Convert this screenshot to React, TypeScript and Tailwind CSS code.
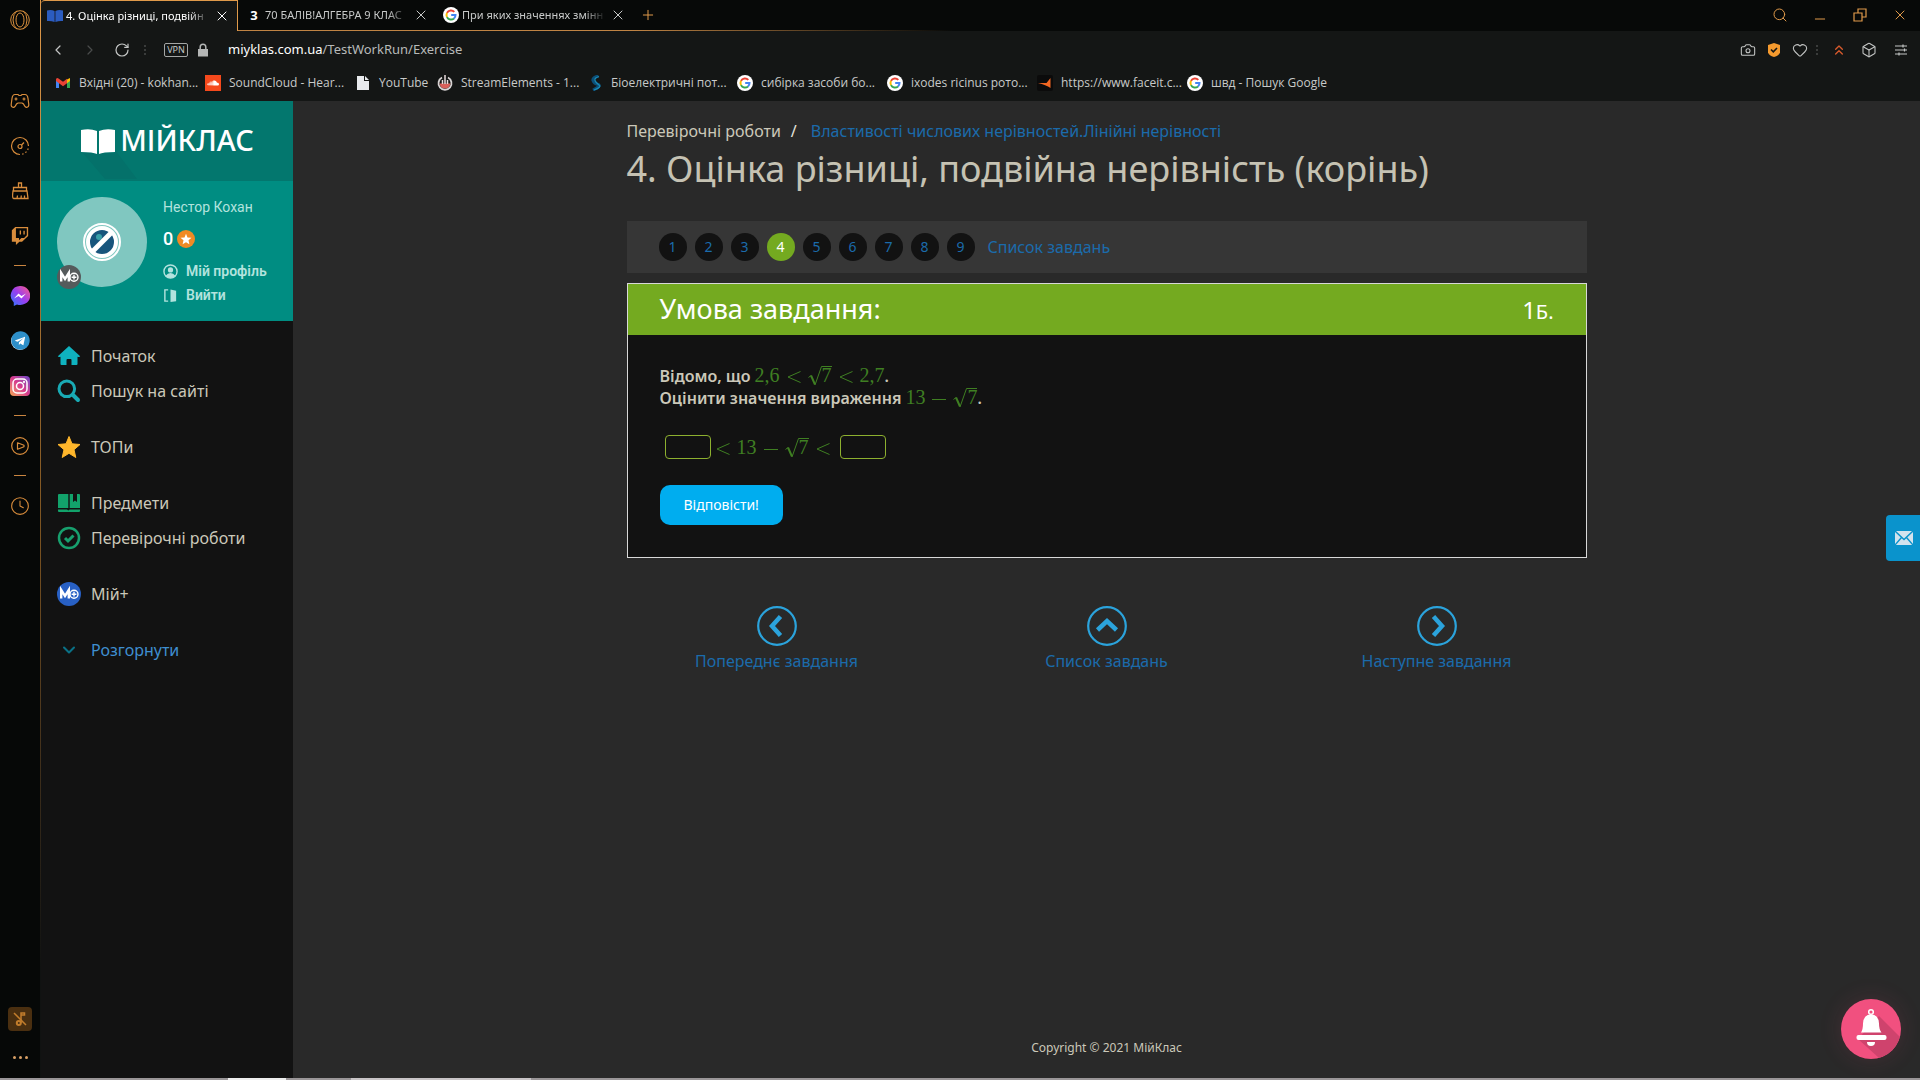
import { ReactNode } from 'react'
import {
  Box,
  Camera,
  ChevronDown,
  ChevronLeft,
  ChevronRight,
  ChevronsUp,
  Clock,
  Heart,
  Minus,
  Plus,
  RotateCw,
  Search,
  X,
} from 'lucide-react'
import { FaSoundcloud, FaTelegram, FaTwitch } from 'react-icons/fa'

const tabs = [
  { title: '4. Оцінка різниці, подвійн', icon: 'book', active: true },
  { title: '70 БАЛІВ!АЛГЕБРА 9 КЛАС', icon: 'three', active: false },
  { title: 'При яких значеннях змінн', icon: 'google', active: false },
]

const bookmarks = [
  { title: 'Вхідні (20) - kokhan...', icon: 'gmail', width: 'w-[150px]' },
  { title: 'SoundCloud - Hear...', icon: 'soundcloud', width: 'w-[150px]' },
  { title: 'YouTube', icon: 'page', width: 'w-[82px]' },
  { title: 'StreamElements - 1...', icon: 'stream', width: 'w-[150px]' },
  { title: 'Біоелектричні пот...', icon: 'bio', width: 'w-[150px]' },
  { title: 'сибірка засоби бо...', icon: 'google', width: 'w-[150px]' },
  { title: 'ixodes ricinus рото...', icon: 'google', width: 'w-[150px]' },
  { title: 'https://www.faceit.c...', icon: 'faceit', width: 'w-[150px]' },
  { title: 'швд - Пошук Google', icon: 'google', width: 'w-[150px]' },
]

const menu = [
  [
    { title: 'Початок', icon: 'home' },
    { title: 'Пошук на сайті', icon: 'search' },
  ],
  [{ title: 'ТОПи', icon: 'star' }],
  [
    { title: 'Предмети', icon: 'books' },
    { title: 'Перевірочні роботи', icon: 'check' },
  ],
  [{ title: 'Мій+', icon: 'plus' }],
]

function Favicon({ name }: { name: string }) {
  switch (name) {
    case 'book':
      return (
        <svg viewBox="0 0 16 16" className="size-4 shrink-0">
          <path d="M0 2.5q4-1 7.6.4v11Q4 12.600 0 13zM16 2.500q-4-1-7.600.4v11Q12 12.600 16 13z" fill="#2b5cc0" />
        </svg>
      )
    case 'three':
      return <span className="w-4 shrink-0 text-center text-[13px] leading-4 font-bold text-white">3</span>
    case 'gmail':
      return (
        <svg viewBox="0 0 16 16" className="size-4 shrink-0">
          <path d="M1 4v9h3V7z" fill="#4285f4" />
          <path d="M15 4v9h-3V7z" fill="#34a853" />
          <path d="M12 4.500 15 3v3l-3 2.300z" fill="#fbbc04" />
          <path d="M1 4.500Q1.500 2.500 3.500 3.400L8 6.800l4-3v4.400l-4 3-7-5.200z" fill="#ea4335" />
        </svg>
      )
    case 'soundcloud':
      return (
        <span className="flex size-4 shrink-0 items-center justify-center bg-[#f5491c]">
          <FaSoundcloud className="size-3 text-white" />
        </span>
      )
    case 'page':
      return (
        <svg viewBox="0 0 16 16" className="size-4 shrink-0">
          <path d="M2 1h7v5h5v9H2z" fill="#e8eaed" />
          <path d="M10 1l4 4h-4z" fill="#e8eaed" />
        </svg>
      )
    case 'stream':
      return (
        <svg viewBox="0 0 16 16" className="size-4 shrink-0" fill="none">
          <path d="M5 2.500A6.500 6.500 0 1 0 11 2.500" stroke="#d8d4d4" strokeWidth="1.800" />
          <path d="M2.500 8.500h11q-1 5-5.500 5t-5.500-5z" fill="#d9605a" />
          <path d="M8 0v9M5.500 5v4M10.500 5v4" stroke="#e8dcdc" strokeWidth="1.500" />
        </svg>
      )
    case 'bio':
      return (
        <svg viewBox="0 0 16 16" className="size-4 shrink-0" fill="none">
          <path d="M11.500 1Q5 2.500 6 5.500T11 9.500 6 15" stroke="#0b4f78" strokeWidth="3" />
          <path d="M12 1.500Q7 3 8 5.500T12 10 7 15" stroke="#1b8bb5" strokeWidth="1.300" />
        </svg>
      )
    case 'faceit':
      return (
        <svg viewBox="0 0 16 16" className="size-4 shrink-0">
          <rect width="16" height="16" rx="2" fill="#0b0b0b" />
          <path d="M1 8h8.500L13.500 3v10Q9 10 1 8z" fill="#f26722" />
        </svg>
      )
    default:
      return (
        <svg viewBox="0 0 16 16" className="size-4 shrink-0" fill="none" strokeWidth="2">
          <circle cx="8" cy="8" r="8" fill="#fff" />
          <path d="M11.300 4.900A4.500 4.500 0 0 0 4 5.900" stroke="#ea4335" />
          <path d="M4 5.900a4.500 4.500 0 0 0 0 4.200" stroke="#fbbc05" />
          <path d="M4 10.100a4.500 4.500 0 0 0 7 1.300" stroke="#34a853" />
          <path d="M8.200 8h4.300a4.500 4.500 0 0 1-1.500 3.400" stroke="#4285f4" />
        </svg>
      )
  }
}

function MenuIcon({ name }: { name: string }) {
  switch (name) {
    case 'home':
      return (
        <svg viewBox="0 0 24 24" className="size-6" fill="#0fb2bf">
          <path d="M12 2 .8 12.200q.4 1.200 2.700.6V20q0 1 1 1h5v-5q0-1 1-1h3q1 0 1 1v5h5q1 0 1-1v-7.200q2.300.6 2.700-.6z" />
        </svg>
      )
    case 'search':
      return (
        <svg viewBox="0 0 24 24" className="size-6" fill="none" stroke="#19aab4" strokeLinecap="round">
          <circle cx="9.800" cy="9.800" r="7.800" strokeWidth="3" />
          <path d="m16 16 5 5" strokeWidth="4" />
        </svg>
      )
    case 'star':
      return (
        <svg viewBox="0 0 24 24" className="size-6" fill="#ffb62b" stroke="#ffb62b" strokeLinejoin="round">
          <path d="m12 1.500 3 7.300 8 .7-6 5.200 1.800 7.800L12 18.300l-6.800 4.200L7 14.700 1 9.500l8-.7z" />
        </svg>
      )
    case 'books':
      return (
        <svg viewBox="0 0 24 24" className="size-6" fill="#12a36b">
          <path d="M1 4q0-1 1-1h9.300v14H1zM12.700 3H16v8l2-1.600 2 1.600V3h2q1 0 1 1v13H12.700z" />
          <path d="M1 18.500h9l1.300 1 1.400-1H23V20q0 1-1 1H2q-1 0-1-1z" />
        </svg>
      )
    case 'check':
      return (
        <svg viewBox="0 0 24 24" className="size-6" fill="none" stroke="#17a06e">
          <circle cx="12" cy="12" r="10" strokeWidth="2.500" />
          <path d="m8 12 3 3 5.500-5.500" strokeWidth="3" />
        </svg>
      )
    default:
      return <PlusBadge className="bg-[#2860c4]" />
  }
}

function PlusBadge({ className }: { className: string }) {
  return (
    <span className={`flex size-6 items-center justify-center rounded-full ${className}`}>
      <svg viewBox="0 0 24 24" className="size-6" fill="none" stroke="#fff">
        <path d="M4.200 16.500V8l3.800 6 3.800-6v8.500" strokeWidth="2.400" />
        <circle cx="17" cy="12.200" r="4" strokeWidth="1.400" />
        <path d="M17 9.800v4.800M14.600 12.200h4.800" strokeWidth="1.400" />
      </svg>
    </span>
  )
}

function RailButton({ label, children }: { label: string; children: ReactNode }) {
  return (
    <button aria-label={label} className="flex h-[45px] w-full items-center justify-center text-[#d98d3c]">
      {children}
    </button>
  )
}

function RailDivider() {
  return <div className="my-[7px] h-px w-3 bg-[#c98540]" />
}

function BrowserRail() {
  return (
    <aside className="flex w-10 shrink-0 flex-col items-center bg-[#060807]">
      <button aria-label="Opera" className="mt-2 mb-[46px] flex h-6 items-center text-[#d9903d]">
        <svg viewBox="0 0 20 20" className="size-5" fill="none" stroke="currentColor">
          <circle cx="10" cy="10" r="9.300" />
          <ellipse cx="10" cy="10" rx="4" ry="7" />
          <path d="M7 .9Q3 4 3 10t4 9.100M13 .9Q17 4 17 10t-4 9.100" />
        </svg>
      </button>
      <RailButton label="Ігри">
        <svg viewBox="0 0 20 20" className="size-5" fill="none" stroke="currentColor" strokeWidth="1.200">
          <path d="M5 3.500h3l1 1h2l1-1h3q2.500 0 3 4l.8 6q0 3-2.300 2.800-1.500 0-3-3.300l-1.500-1h-4l-1.500 1q-1.500 3.300-3 3.300Q1 16.500 1.200 13.500L2 7.500q.5-4 3-4z" />
          <path d="M4.500 8h3M6 6.500v3M12.500 8h3M14 6.500v3" />
        </svg>
      </RailButton>
      <RailButton label="GX Control">
        <svg viewBox="0 0 20 20" className="size-5" fill="none" stroke="currentColor" strokeWidth="1.200">
          <path d="M10 18.500A8.500 8.500 0 1 1 18.500 10" />
          <path d="M18.200 12.500A8.500 8.500 0 0 1 11 18.400" strokeDasharray="1.500 2" />
          <circle cx="10" cy="10.500" r="2" />
          <path d="m11.500 9 2.500-2.500" />
        </svg>
      </RailButton>
      <RailButton label="GX Cleaner">
        <svg viewBox="0 0 20 20" className="size-5" fill="none" stroke="currentColor" strokeWidth="1.300">
          <path d="M8.500 6.500V2h3v4.500M3.500 10V6.500h13V10M3 10h14l1 7.500H3.500Q2 17 3 10zM7 17.500l.5-3M11 17.500l.3-3M14.500 17.500v-3" />
        </svg>
      </RailButton>
      <RailButton label="Twitch">
        <FaTwitch className="size-[18px]" />
      </RailButton>
      <RailDivider />
      <RailButton label="Messenger">
        <svg viewBox="0 0 20 20" className="size-5">
          <defs>
            <linearGradient id="messenger" x1="0" y1="1" x2="1" y2="0">
              <stop offset="0" stopColor="#2a7bff" />
              <stop offset=".5" stopColor="#9a3df0" />
              <stop offset="1" stopColor="#ff5f86" />
            </linearGradient>
          </defs>
          <path d="M10 0a10 9.500 0 1 1-3 18.500L3.800 20v-3.500A9.500 9.500 0 0 1 10 0z" fill="url(#messenger)" />
          <path d="m4 12.500 4.500-5 3 2.600 4.500-2.600-4.500 5-3-2.600z" fill="#fff" />
        </svg>
      </RailButton>
      <RailButton label="Telegram">
        <span className="flex size-[18px] items-center justify-center rounded-full bg-white">
          <FaTelegram className="size-[19px] shrink-0 text-[#2d8fc9]" />
        </span>
      </RailButton>
      <RailButton label="Instagram">
        <span className="flex size-5 items-center justify-center rounded bg-linear-to-tr from-[#f5a34a] via-[#d8398c] to-[#6a3fc8]">
          <svg viewBox="0 0 20 20" className="size-5" fill="none" stroke="#fff" strokeWidth="1.500">
            <rect x="3" y="3" width="14" height="14" rx="4" />
            <circle cx="10" cy="10" r="3.500" />
            <circle cx="14" cy="6" r=".4" />
          </svg>
        </span>
      </RailButton>
      <RailDivider />
      <RailButton label="Плеєр">
        <svg viewBox="0 0 18 18" className="size-[18px]" fill="none" stroke="currentColor" strokeWidth="1.200">
          <circle cx="9" cy="9" r="8.300" />
          <path d="M6.500 5.800v6.400L13 9.700V8.300z" strokeLinejoin="round" />
        </svg>
      </RailButton>
      <RailDivider />
      <RailButton label="Історія">
        <Clock className="size-5" strokeWidth={1.300} />
      </RailButton>
      <div className="mt-auto flex flex-col items-center gap-5 pb-[15px]">
        <button aria-label="Вимкнути музику" className="flex size-6 items-center justify-center rounded bg-[#4a2f10]">
          <svg viewBox="0 0 24 24" className="size-6" fill="none" stroke="#c27d2c">
            <path d="M13 16V6h3.500v2H13" strokeWidth="1.500" />
            <circle cx="10.800" cy="16" r="2" strokeWidth="2" />
            <path d="m6 6 12 12" strokeWidth="1.500" />
          </svg>
        </button>
        <button aria-label="Ще" className="flex h-3 items-center gap-[3px]">
          <span className="size-[3px] rounded-full bg-[#d9a066]" />
          <span className="size-[3px] rounded-full bg-[#d9a066]" />
          <span className="size-[3px] rounded-full bg-[#d9a066]" />
        </button>
      </div>
    </aside>
  )
}

function Dots() {
  return (
    <svg viewBox="0 0 4 12" className="h-3 w-1" fill="#3a3c3b">
      <path d="M1 1h2v2H1zM1 5h2v2H1zM1 9h2v2H1z" />
    </svg>
  )
}

function BrowserHeader() {
  return (
    <header className="bg-[#141615] text-xs">
      {/* Tab strip */}
      <div className="flex h-[31px] bg-[#070908]">
        {tabs.map((tab) => (
          <div
            key={tab.icon}
            className={
              tab.active
                ? 'flex w-[197px] items-center rounded-tl border-t border-r border-[#e09a4a] bg-[#141615] pl-[6px] text-white'
                : 'flex w-[197px] items-center border-b border-[#c08444] pl-2 text-[#c8cac9]'
            }
          >
            <Favicon name={tab.icon} />
            <span className="ml-[3px] w-[144px] text-[11px] whitespace-nowrap [mask-image:linear-gradient(to_right,black_85%,transparent)]">
              {tab.title}
            </span>
            <button aria-label="Закрити вкладку" className="ml-1 flex size-4 items-center justify-center">
              <X className="size-4" strokeWidth={1.500} />
            </button>
          </div>
        ))}
        <div className="flex flex-1 items-center border-b border-transparent pl-2 text-[#e09a4a] [border-image:linear-gradient(to_right,#c08444,transparent_25%)_1]">
          <button aria-label="Нова вкладка">
            <Plus className="size-4" strokeWidth={1.500} />
          </button>
          <div className="ml-auto flex items-center gap-6 pr-3">
            <button aria-label="Пошук вкладок">
              <Search className="size-4" strokeWidth={1.500} />
            </button>
            <button aria-label="Згорнути" className="pt-2">
              <Minus className="size-4" strokeWidth={1.500} />
            </button>
            <button aria-label="Відновити">
              <svg viewBox="0 0 16 16" className="size-4" fill="none" stroke="currentColor" strokeWidth="1.200">
                <path d="M2 6h8v8H2zM6 6V2h8v8h-4" />
              </svg>
            </button>
            <button aria-label="Закрити">
              <X className="size-4" strokeWidth={1.500} />
            </button>
          </div>
        </div>
      </div>

      {/* Address bar */}
      <div className="flex h-[38px] items-center pl-[9px] text-[#c4c6c5]">
        <button aria-label="Назад">
          <ChevronLeft className="size-4" strokeWidth={1.800} />
        </button>
        <button aria-label="Вперед" className="ml-4 text-[#4a4c4b]">
          <ChevronRight className="size-4" strokeWidth={1.800} />
        </button>
        <button aria-label="Оновити" className="ml-4">
          <RotateCw className="size-4" strokeWidth={1.800} />
        </button>
        <span className="ml-[13px]">
          <Dots />
        </span>
        <button className="ml-[17px] h-[14px] w-6 rounded-xs border border-[#a4a6a5] text-[9px] leading-3">VPN</button>
        <svg viewBox="0 0 12 14" className="ml-[9px] h-[14px] w-3" fill="#b4b6b5">
          <path d="M1 6h10v7.500H1z" />
          <path d="M3.200 6V4a2.800 2.800 0 0 1 5.600 0v2" fill="none" stroke="#b4b6b5" strokeWidth="1.500" />
        </svg>
        <a href="#address" className="ml-[19px] text-[13px] text-[#b8bab9]">
          <span className="text-white">miyklas.com.ua</span>/TestWorkRun/Exercise
        </a>
        <div className="ml-auto flex items-center gap-[10px] pr-[11px]">
          <button aria-label="Знімок">
            <Camera className="size-4" strokeWidth={1.600} />
          </button>
          <button aria-label="Захист">
            <svg viewBox="0 0 16 16" className="size-4">
              <path d="M8 1 2 3v7.500Q3 13.500 8 15q5-1.500 6-4.500V3z" fill="#f59a2e" />
              <path d="m5 7.500 2.300 2.300L11 6" fill="none" stroke="#141615" strokeWidth="1.600" />
            </svg>
          </button>
          <button aria-label="Вподобати">
            <Heart className="size-4" strokeWidth={1.600} />
          </button>
          <div className="-ml-[3px] flex items-center gap-3">
            <Dots />
            <button aria-label="Розширення Faceit" className="text-[#d85a2c]">
              <ChevronsUp className="size-4" strokeWidth={2} />
            </button>
          </div>
          <div className="ml-1 flex items-center gap-4">
            <button aria-label="Розширення">
              <Box className="size-4" strokeWidth={1.600} />
            </button>
            <button aria-label="Налаштування">
              <svg viewBox="0 0 16 16" className="size-4" fill="none" stroke="currentColor" strokeWidth="1.200">
                <path d="M2 4h12M2 8h12M2 12h12M10 2.500v3M11.500 6.500v3M6 10.500v3" />
              </svg>
            </button>
          </div>
        </div>
      </div>

      {/* Bookmarks */}
      <nav className="flex h-8 items-center pb-1 pl-[14px] font-['Open_Sans','Noto_Sans',sans-serif] text-[#c8cac9]">
        {bookmarks.map((b) => (
          <a key={b.title} href="#bookmark" className={`flex items-center gap-2 whitespace-nowrap ${b.width}`}>
            <Favicon name={b.icon} />
            {b.title}
          </a>
        ))}
      </nav>
    </header>
  )
}

function SiteSidebar() {
  return (
    <aside className="w-[252px] shrink-0 bg-[#121212]">
      <a href="#home" className="flex h-20 items-center justify-center gap-1 bg-[#03776e] pb-[2px] text-white">
        <svg viewBox="0 0 36 40" className="h-10 w-9 overflow-visible">
          <path d="M2 32 18 33h17v-3l22 29H25z" fill="#04716a" />
          <path d="M1 10q9-2 16 1v23q-4-2-16-2zM35 10q-9-2-16 1v23q4-2 16-2z" fill="#fff" />
        </svg>
        <span className="text-[29px] font-medium">МІЙКЛАС</span>
      </a>

      <div className="flex h-[140px] bg-[#008d82] pt-4 pl-4 font-[Roboto,sans-serif] text-[#b3e3de]">
        <div className="relative flex size-[90px] items-center justify-center rounded-full bg-[#80c7c0]">
          <svg viewBox="0 0 38 38" className="size-[38px]" fill="none">
            <circle cx="19" cy="19" r="18" stroke="#fff" strokeWidth="2" />
            <circle cx="19" cy="19" r="14" fill="#17557c" stroke="#fff" strokeWidth="4" />
            <circle cx="16" cy="14" r="3" fill="#38a0a8" />
            <path d="M10 28 28 10" stroke="#fff" strokeWidth="5" />
          </svg>
          <div className="absolute bottom-[-2px] left-0">
            <PlusBadge className="bg-[#555b5c]" />
          </div>
        </div>
        <div className="ml-4 text-sm">
          <div className="leading-5">Нестор Кохан</div>
          <div className="mt-2 flex h-7 items-center gap-1 text-lg font-medium text-white">
            0
            <span className="flex size-[18px] items-center justify-center rounded-full bg-[#f08a24]">
              <svg viewBox="0 0 24 24" className="size-3" fill="#fff">
                <path d="m12 1.500 3 7.300 8 .7-6 5.200 1.800 7.800L12 18.300l-6.800 4.200L7 14.700 1 9.500l8-.7z" />
              </svg>
            </span>
          </div>
          <a href="#profile" className="mt-[6px] flex h-6 items-center gap-2 font-semibold">
            <svg viewBox="0 0 16 16" className="size-[15px]" fill="#b3e3de">
              <circle cx="8" cy="8" r="7" fill="none" stroke="#b3e3de" strokeWidth="1.500" />
              <circle cx="8" cy="6.300" r="2.800" />
              <path d="M2.800 12.500q2.200-3 5.200-3t5.200 3Q11 15 8 15t-5.200-2.500z" />
            </svg>
            Мій профіль
          </a>
          <a href="#logout" className="flex h-6 items-center gap-2 font-semibold">
            <svg viewBox="0 0 16 16" className="size-[15px]" fill="#b3e3de">
              <path d="M5.500 2H2v12h3.500" fill="none" stroke="#b3e3de" strokeWidth="1.500" />
              <path d="M8 1.500 14 3v11l-6 1z" />
            </svg>
            Вийти
          </a>
        </div>
      </div>

      <nav className="flex flex-col gap-[21px] pt-[17px] text-base text-[#cbc8b9]">
        {menu.map((group) => (
          <div key={group[0].title}>
            {group.map((item) => (
              <a key={item.title} href="#menu" className="flex h-[35px] items-center gap-[10px] pl-4">
                <MenuIcon name={item.icon} />
                {item.title}
              </a>
            ))}
          </div>
        ))}
        <button className="flex h-[35px] items-center gap-[10px] pl-4 text-[#3f8fd0]">
          <span className="flex size-6 items-center justify-center">
            <ChevronDown className="size-5 text-[#0a7186]" strokeWidth={2.500} />
          </span>
          Розгорнути
        </button>
      </nav>
    </aside>
  )
}

// the radical's foot hangs below the baseline
function Sqrt({ children }: { children: ReactNode }) {
  return (
    <span className="inline-flex items-baseline">
      <svg viewBox="0 0 14 16" className="h-4 w-[14px] overflow-visible" fill="none" stroke="currentColor">
        <path d="m.5 11.500 2.500-2" strokeWidth="1" />
        <path d="m3 9.500 4 9" strokeWidth="2" />
        <path d="M7 19 13.500.5H14" strokeWidth="1" />
      </svg>
      <span className="inline-block border-t border-current leading-4">{children}</span>
    </span>
  )
}

function MathText({ children }: { children: ReactNode }) {
  return (
    <span className="inline-flex items-baseline gap-[7px] font-['Liberation_Serif',serif] text-xl leading-[22px] font-normal text-[#3f7f22]">
      {children}
    </span>
  )
}

function Sign({ type }: { type: 'less' | 'minus' }) {
  return (
    <svg viewBox="0 0 14 14" className="h-[14px] w-[14px] overflow-visible" fill="none" stroke="currentColor">
      <path d={type === 'less' ? 'M13.500 3.500 1 9l12.500 5.500' : 'M0 9.500h14'} />
    </svg>
  )
}

function TaskNavigation() {
  return (
    <nav className="mt-[30px] flex h-[52px] items-center gap-2 bg-[#363636] pl-8">
      {[1, 2, 3, 4, 5, 6, 7, 8, 9].map((n) => (
        <a
          key={n}
          href={`#task-${n}`}
          className={
            n === 4
              ? 'flex size-7 items-center justify-center rounded-full bg-[#74aa20] text-sm text-white'
              : 'flex size-7 items-center justify-center rounded-full bg-[#121212] text-sm text-[#1b6bab]'
          }
        >
          {n}
        </a>
      ))}
      <a href="#tasks" className="ml-[5px] text-[#1b6bab]">
        Список завдань
      </a>
    </nav>
  )
}

function StepLink({ d, title }: { d: string; title: string }) {
  return (
    <a href="#step" className="flex flex-1 flex-col items-center text-[#1b6bab]">
      <svg viewBox="0 0 40 40" className="size-10" fill="none" stroke="#2ba3dc">
        <circle cx="20" cy="20" r="18.800" strokeWidth="2.200" />
        <path d={d} strokeWidth="4.500" />
      </svg>
      <span className="mt-[3px] leading-6">{title}</span>
    </a>
  )
}

export default function App() {
  return (
    <div className="flex min-h-screen flex-col bg-[#060807] font-['Noto_Sans','Open_Sans',sans-serif]">
      <div className="flex flex-1">
        <BrowserRail />
        <div className="w-px bg-linear-to-b from-[#e09a4a] via-[#7a5220] via-50% to-[#101211] to-90%" />
        <div className="flex flex-1 flex-col">
          <BrowserHeader />
          <div className="flex flex-1">
            <SiteSidebar />
            <div className="flex flex-1 flex-col bg-[#292929] px-4">
              <main className="mx-auto w-full max-w-[960px] pt-[18px] text-base">
                <div className="flex leading-6">
                  <a href="#works" className="text-[#cbc8b9]">
                    Перевірочні роботи
                  </a>
                  <span className="mx-[10px] text-[#e4e2dc]">/</span>
                  <a href="#topic" className="ml-1 text-[#1b6bab]">
                    Властивості числових нерівностей.Лінійні нерівності
                  </a>
                </div>
                <h1 className="mt-1 text-4xl leading-[44px] text-[#c5c2b3]">
                  4. Оцінка різниці, подвійна нерівність (корінь)
                </h1>

                <TaskNavigation />

                <section className="mt-[10px] border border-[#d8d8d8] bg-[#121212]">
                  <div className="flex h-[51px] items-center justify-between bg-[#74aa20] px-8 text-white">
                    <h2 className="text-[27px]">Умова завдання:</h2>
                    <span className="text-2xl">
                      1<span className="text-xl">Б.</span>
                    </span>
                  </div>
                  <form className="px-8 pt-[29px] pb-8" onSubmit={(e) => e.preventDefault()}>
                    <div className="font-semibold text-[#cbc8b9]">
                      <p className="flex h-[22px] items-baseline gap-1">
                        Відомо, що
                        <span>
                          <MathText>
                            2,6
                            <Sign type="less" />
                            <Sqrt>7</Sqrt>
                            <Sign type="less" />
                            2,7
                          </MathText>
                          .
                        </span>
                      </p>
                      <p className="flex h-[22px] items-baseline gap-1">
                        Оцінити значення вираження
                        <span>
                          <MathText>
                            13
                            <Sign type="minus" />
                            <Sqrt>7</Sqrt>
                          </MathText>
                          .
                        </span>
                      </p>
                    </div>
                    <div className="mt-[27px] flex h-6 items-center pl-[5px]">
                      <input
                        aria-label="Нижня межа"
                        className="mr-[5px] h-6 w-[46px] rounded border border-[#8db02f] bg-transparent px-1 text-white"
                      />
                      <MathText>
                        <Sign type="less" />
                        13
                        <Sign type="minus" />
                        <Sqrt>7</Sqrt>
                        <Sign type="less" />
                      </MathText>
                      <input
                        aria-label="Верхня межа"
                        className="ml-[10px] h-6 w-[46px] rounded border border-[#8db02f] bg-transparent px-1 text-white"
                      />
                    </div>
                    <button className="mt-[26px] h-10 rounded-[10px] bg-[#00adef] px-6 text-sm text-white">
                      Відповісти!
                    </button>
                  </form>
                </section>

                <div className="-mx-[15px] mt-12 flex">
                  <StepLink d="M23.500 10.500 15 20l8.500 9.500" title="Попереднє завдання" />
                  <StepLink d="M10.500 24 20 15l9.500 9" title="Список завдань" />
                  <StepLink d="M16.500 10.500 25 20l-8.500 9.500" title="Наступне завдання" />
                </div>
              </main>
              <footer className="mt-auto pb-[22px] text-center text-xs text-[#cbc8b9]">Copyright © 2021 МійКлас</footer>
            </div>
          </div>
        </div>
      </div>

      <div className="flex h-[2px] bg-[#9a9698]">
        <div className="ml-[228px] w-[58px] bg-[#eeeeee]" />
        <div className="ml-[65px] w-[180px] bg-[#c8c4c6]" />
      </div>

      <button
        aria-label="Написати нам"
        className="fixed top-[515px] right-0 flex h-[46px] w-[34px] items-center justify-center rounded-l bg-[#0a93cc] pl-[2px]"
      >
        <svg viewBox="0 0 18 14" className="h-[14px] w-[18px]">
          <path d="M0 0h18v14H0z" fill="#d3e3ee" />
          <path d="m0 0 9 8.500L18 0M0 14l6.500-7.500M18 14l-6.500-7.500" fill="none" stroke="#0a93cc" strokeWidth="1.400" />
        </svg>
      </button>

      <button
        aria-label="Сповіщення"
        className="fixed right-[19px] bottom-[21px] size-[60px] overflow-hidden rounded-full bg-[#f1507f] shadow-[0_0_24px_#f1507f22]"
      >
        <svg viewBox="0 0 60 60" className="size-[60px]">
          <path d="m38 17 40 40-20 20-41-37z" fill="#cf436d" />
          <path d="M20 33.500q2-3 2-9 .5-9 8-9t8 9q0 6 2.500 9z" fill="#fff" />
          <circle cx="30" cy="13" r="2.300" fill="none" stroke="#fff" strokeWidth="1.500" />
          <rect x="15.500" y="36" width="30" height="5" rx="2" fill="#fff" />
          <path d="M26 43h8q0 4-4 4t-4-4z" fill="#fff" />
        </svg>
      </button>
    </div>
  )
}
